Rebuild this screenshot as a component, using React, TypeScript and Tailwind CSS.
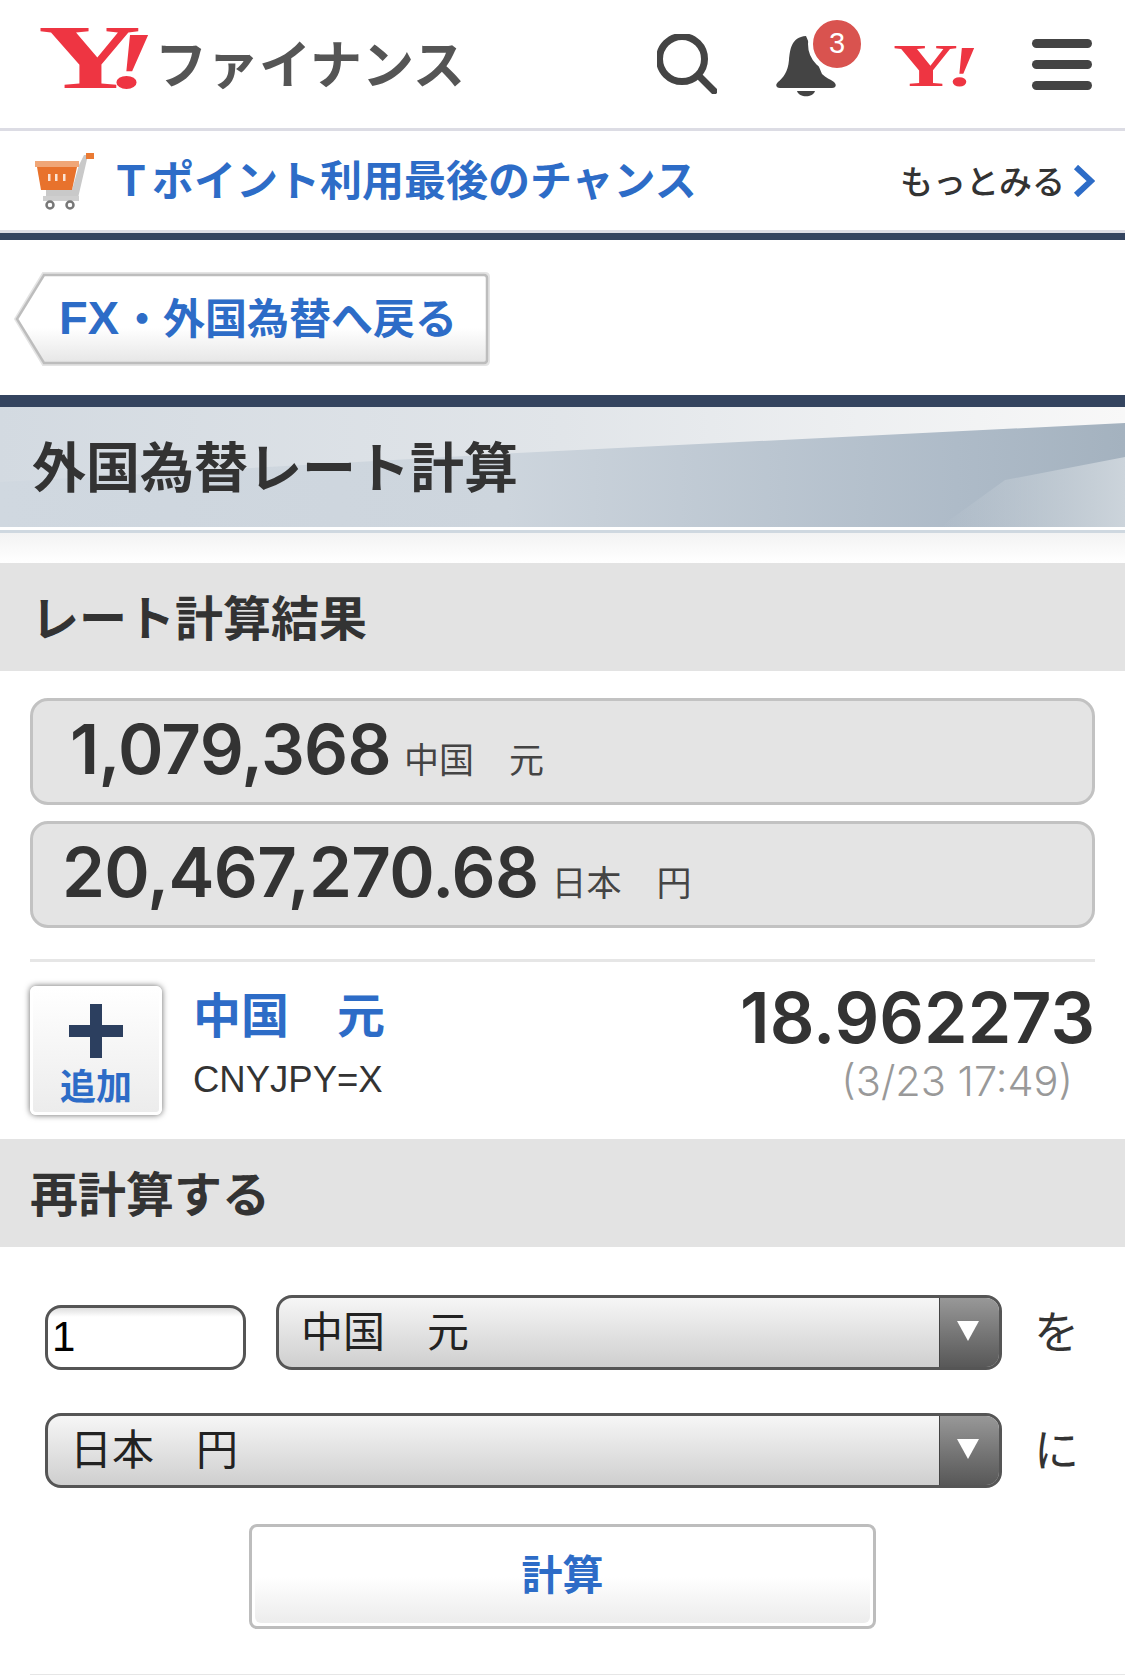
const jp = "font-['Noto_Sans_CJK_JP','Noto_Sans_CJK_SC',sans-serif]";
const num = "font-['Inter','Liberation_Sans',sans-serif]";
const arial = "font-['Liberation_Sans',Arial,sans-serif]";

const SearchIcon = () => (
  <svg width="60" height="60" viewBox="0 0 60 60" fill="none" stroke="#444" strokeLinecap="round">
    <circle cx="25" cy="25" r="22.5" strokeWidth="7" />
    <path d="M42 42 L57 57" strokeWidth="7" />
  </svg>
);

const BellIcon = () => (
  <svg width="60" height="62" viewBox="0 0 60 62" fill="#444">
    <path d="M30 0 C15 1 14 14 13 24 C12 36 7 42 2 46 C-1 49 0 52 4 52 L56 52 C60 52 61 49 58 46 C54 43 50 42 46 38 L30 0 Z" />
    <path d="M21 55 L39 55 C37 62 23 62 21 55 Z" />
  </svg>
);

const CartIcon = () => (
  <svg width="60" height="58" viewBox="0 0 60 58">
    <path d="M45 13 L50 3 L54 3 L44 46 L12 46 L12 38 L38 38 Z" fill="#c9c9c9" />
    <rect x="52" y="1" width="8" height="6" fill="#ea7a33" />
    <rect x="1" y="9" width="44" height="6" fill="#f0a677" />
    <path d="M3 15 L43 15 L38 38 L7 38 Z" fill="#e8722c" />
    <rect x="14" y="22" width="2.5" height="7" fill="#fbe3d4" />
    <rect x="21" y="22" width="2.5" height="7" fill="#fbe3d4" />
    <rect x="29" y="22" width="2.5" height="7" fill="#fbe3d4" />
    <rect x="9" y="44" width="36" height="5" fill="#cfcfcf" />
    <circle cx="16" cy="53" r="3.5" fill="#fff" stroke="#777" strokeWidth="2.5" />
    <circle cx="36" cy="53" r="3.5" fill="#fff" stroke="#777" strokeWidth="2.5" />
  </svg>
);

const BackShape = () => (
  <svg className="absolute inset-0" width="477" height="94" viewBox="0 0 477 94">
    <defs>
      <linearGradient id="backFill" x1="0" y1="0" x2="0" y2="1">
        <stop offset="0" stopColor="#fff" />
        <stop offset="0.6" stopColor="#fff" />
        <stop offset="1" stopColor="#e6e6e6" />
      </linearGradient>
    </defs>
    <path d="M30 1 L472 1 Q476 1 476 5 L476 89 Q476 93 472 93 L30 93 L2 47 Z" fill="none" stroke="#e4e4e4" strokeWidth="2" />
    <path d="M31 3 L471 3 Q474 3 474 6 L474 88 Q474 91 471 91 L31 91 L4 47 Z" fill="url(#backFill)" stroke="#bdbdbd" strokeWidth="2.5" />
  </svg>
);

const TitleBg = () => (
  <svg className="absolute inset-0 w-full h-full" viewBox="0 0 1125 120" preserveAspectRatio="none">
    <defs>
      <linearGradient id="bandTop" x1="0" y1="0" x2="1" y2="0">
        <stop offset="0" stopColor="#d3dae1" />
        <stop offset="0.5" stopColor="#e1e5e9" />
        <stop offset="1" stopColor="#f8f8f8" />
      </linearGradient>
      <linearGradient id="bandMid" x1="0" y1="0" x2="1" y2="0">
        <stop offset="0" stopColor="#d0d8e0" />
        <stop offset="0.45" stopColor="#cdd5dd" />
        <stop offset="0.85" stopColor="#aebbc8" />
        <stop offset="1" stopColor="#a4b2bf" />
      </linearGradient>
      <linearGradient id="bandLow" x1="0" y1="0" x2="1" y2="0">
        <stop offset="0" stopColor="#ccd4db" stopOpacity="0" />
        <stop offset="0.6" stopColor="#ccd4db" stopOpacity="0.6" />
        <stop offset="1" stopColor="#ccd4db" />
      </linearGradient>
    </defs>
    <rect width="1125" height="120" fill="url(#bandTop)" />
    <path d="M517 46 L1125 16 L1125 120 L0 120 L0 75 Z" fill="url(#bandMid)" />
    <path d="M1005 73 L1125 50 L1125 120 L940 120 Z" fill="url(#bandLow)" />
  </svg>
);

const ResultBox = ({ value, unit, pad }: { value: string; unit: string; pad: string }) => (
  <div className={`h-[107px] rounded-[18px] border-[3px] border-[#c2c2c2] bg-[#e4e4e4] flex items-center ${pad}`}>
    <span className={`${num} font-semibold text-[69px] tracking-[-0.01em] leading-none text-[#333] pb-[5px]`}>{value}</span>
    <span className={`${jp} text-[35px] leading-none text-[#444] ml-[13px] mt-[12px]`}>{unit}</span>
  </div>
);

const Select = ({ label, className }: { label: string; className: string }) => (
  <div className={`h-[75px] rounded-[16px] border-[3px] border-[#555] flex overflow-hidden bg-gradient-to-b from-[#f6f6f6] to-[#cfcfcf] ${className}`}>
    <div className={`${jp} flex-1 pl-[22px] text-[42px] leading-[62px] text-[#222]`}>{label}</div>
    <div className="w-[60px] bg-gradient-to-b from-[#989898] to-[#585858] flex items-center justify-center border-l border-[#444]">
      <div className="w-0 h-0 border-l-[11px] border-r-[11px] border-t-[20px] border-l-transparent border-r-transparent border-t-white mr-[3px] mb-[4px]" />
    </div>
  </div>
);

const SectionHead = ({ label, pad }: { label: string; pad: string }) => (
  <div className={`${jp} h-[108px] bg-[#e3e3e3] flex items-center ${pad} pb-[4px] text-[48px] font-bold text-[#333]`}>{label}</div>
);

export default function App() {
  return (
    <div className="w-[1125px] h-[1675px] bg-white overflow-hidden">
      <header className="h-[128px] flex items-center pr-[33px] pl-[38px]">
        <div className="flex items-center w-[430px]">
          <div className="w-[117px] h-[70px] text-[#ee3542]">
            <span className="inline-block whitespace-nowrap origin-left scale-x-[1.55] font-['Liberation_Serif',serif] font-bold text-[92px] leading-[70px] mt-[-7px]">
              <span className="tracking-[-22px]">Y</span><span className="italic text-[80px]">!</span>
            </span>
          </div>
          <span className={`${jp} font-bold text-[52px] leading-none text-[#555] pb-[4px] whitespace-nowrap`}>ファイナンス</span>
        </div>
        <div className="ml-auto flex items-center">
          <SearchIcon />
          <div className="relative ml-[59px] mt-[6px]">
            <BellIcon />
            <div className="absolute left-[32px] top-[-21px] w-[58px] h-[58px] rounded-full bg-[#d9534f] border-[5px] border-white flex items-center justify-center text-white text-[29px] font-['Liberation_Sans',sans-serif]">3</div>
          </div>
          <div className="ml-[57px] w-[80px] h-[44px] mt-[2px] text-[#ee3542]">
            <span className="inline-block whitespace-nowrap origin-left scale-x-[1.45] font-['Liberation_Serif',serif] font-bold text-[62px] leading-[44px]">
              <span className="tracking-[-8px]">Y</span><span className="italic text-[58px]">!</span>
            </span>
          </div>
          <div className="ml-[59px] w-[60px] flex flex-col gap-[12px]">
            <div className="h-[9px] rounded-full bg-[#444]" />
            <div className="h-[9px] rounded-full bg-[#444]" />
            <div className="h-[9px] rounded-full bg-[#444]" />
          </div>
        </div>
      </header>

      <div className="h-[3px] bg-[#dcdce4]" />

      <div className="h-[99px] flex items-center pl-[34px] pr-[30px]">
        <CartIcon />
        <span className={`${jp} ml-[16px] text-[42px] font-bold leading-none text-[#2d6cc7] pb-[6px]`}>{"\uFF34"}ポイント利用最後のチャンス</span>
        <span className={`${jp} ml-auto text-[33px] font-medium leading-none text-[#333]`}>もっとみる</span>
        <svg className="ml-[8px]" width="22" height="32" viewBox="0 0 22 32" fill="none" stroke="#2d6cc7" strokeWidth="6">
          <path d="M3 2 L18 16 L3 30" />
        </svg>
      </div>

      <div className="h-[3px] bg-[#dcdce4]" />
      <div className="h-[7px] bg-[#34445f]" />

      <div className="pt-[32px] pl-[13px] h-[155px]">
        <div className="relative w-[477px] h-[94px] flex items-center">
          <BackShape />
          <span className={`${jp} relative pl-[46px] pb-[3px] text-[42px] font-bold leading-none text-[#2d6cc7] whitespace-nowrap`}>
            <span className={`${arial} text-[47px] pr-[2px]`}>FX</span>・外国為替へ戻る
          </span>
        </div>
      </div>

      <div className="h-[12px] bg-[#34445f]" />
      <div className="relative h-[120px] flex items-center pl-[32px] pb-[4px]">
        <TitleBg />
        <h1 className={`${jp} relative text-[54px] font-bold leading-none text-[#333]`}>外国為替レート計算</h1>
      </div>
      <div className="mt-[3px] h-[3px] bg-[#cfd8e0]" />
      <div className="h-[30px] bg-gradient-to-b from-[#f3f3f3] to-white" />

      <SectionHead label="レート計算結果" pad="pl-[31px]" />

      <div className="px-[30px] pt-[27px]">
        <div className="flex flex-col gap-[16px]">
          <ResultBox value="1,079,368" unit="中国　元" pad="pl-[37px]" />
          <ResultBox value="20,467,270.68" unit="日本　円" pad="pl-[29px]" />
        </div>
        <div className="mt-[31px] h-[3px] bg-[#e6e6e6]" />

        <div className="mt-[24px] h-[129px] flex">
          <div className="w-[132px] h-[129px] rounded-[6px] border-[3px] border-white bg-gradient-to-b from-white to-[#ececec] shadow-[0_0_6px_rgba(0,0,0,0.6)] flex flex-col items-center">
            <svg className="mt-[15px]" width="54" height="54" viewBox="0 0 54 54" fill="#2c3f5f">
              <rect x="21" y="0" width="12" height="54" />
              <rect x="0" y="21" width="54" height="12" />
            </svg>
            <span className={`${jp} mt-[6px] text-[36px] font-bold leading-[40px] text-[#2d6cc7]`}>追加</span>
          </div>
          <div className="ml-[31px] flex-1 flex flex-col mt-[-4px]">
            <span className={`${jp} text-[48px] font-bold leading-[60px] text-[#2d6cc7]`}>中国　元</span>
            <span className={`${arial} mt-[16px] text-[36.5px] leading-[44px] text-[#333]`}>CNYJPY=X</span>
          </div>
          <div className="flex flex-col items-end">
            <span className={`${num} font-semibold text-[70px] leading-[72px] text-[#333] mt-[-4px]`}>18.962273</span>
            <span className={`${num} font-light mt-[3px] mr-[22px] text-[41.5px] leading-[48px] text-[#999]`}>(3/23 17:49)</span>
          </div>
        </div>
      </div>

      <div className="mt-[24px]">
        <SectionHead label="再計算する" pad="pl-[30px]" />
      </div>

      <div className="pt-[48px] pl-[45px] pr-[30px]">
        <div className="flex items-end">
          <div className={`${arial} w-[201px] h-[65px] rounded-[16px] border-[3px] border-[#555] bg-gradient-to-b from-[#dedede] to-white to-[15%] pl-[4px] text-[42px] leading-[58px] text-black`}>1</div>
          <Select label="中国　元" className="ml-[30px] w-[726px]" />
          <span className={`${jp} ml-[32px] text-[45px] h-[75px] leading-[70px] text-[#333]`}>を</span>
        </div>
        <div className="mt-[43px] flex items-end">
          <Select label="日本　円" className="w-[957px]" />
          <span className={`${jp} ml-[32px] text-[45px] h-[75px] leading-[70px] text-[#333]`}>に</span>
        </div>
        <div className="mt-[36px] ml-[204px] w-[627px] h-[105px] rounded-[8px] border-[3px] border-[#bdbdbd] p-[3px]">
          <div className={`${jp} h-full rounded-[6px] bg-gradient-to-b from-white from-[50%] to-[#ececec] flex items-center justify-center pb-[8px] text-[41px] font-bold leading-none text-[#2d6cc7]`}>計算</div>
        </div>
      </div>

      <div className="ml-[30px] mt-[45px] h-[3px] bg-[#e6e6e6]" />
    </div>
  );
}
